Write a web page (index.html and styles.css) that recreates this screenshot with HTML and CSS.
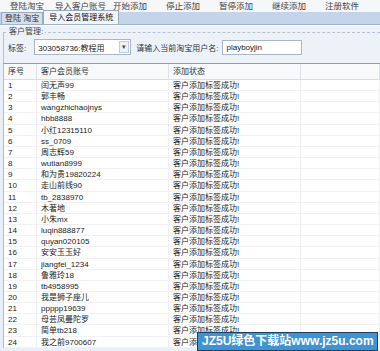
FILE: index.html
```html
<!DOCTYPE html>
<html lang="zh-CN">
<head>
    <meta charset="UTF-8">
    <title>导入会员管理系统</title>
    <link rel="stylesheet" href="styles.css">
</head>
<body>
    <div class="menubar">
        <span class="item short">登陆淘宝</span>
        <span class="item long">导入客户账号</span>
        <span class="item">开始添加</span>
        <span class="item">停止添加</span>
        <span class="item">暂停添加</span>
        <span class="item">继续添加</span>
        <span class="item">注册软件</span>
    </div>

    <div class="tabbar">
        <span class="tab">登陆 淘宝</span>
        <span class="tab active">导入会员管理系统</span>
    </div>

    <div class="panel">
        <div class="group">
            <span class="legend">客户管理:</span>
            <div class="controls">
                <span class="lbl">标签:</span>
                <div class="combo">
                    <span>303058736:教程用</span>
                    <span class="drop">▾</span>
                </div>
                <span class="lbl">请输入当前淘宝用户名:</span>
                <div class="textbox">playboyjin</div>
            </div>
        </div>
    </div>

    <div class="grid" id="grid">
        <div class="cell head">序号</div>
        <div class="cell head">客户会员账号</div>
        <div class="cell head">添加状态</div>
        <div class="cell head"></div>
    </div>

    <div class="watermark">JZ5U绿色下载站www.jz5u.com</div>

    <script>
        var accounts = [
            '闰无声99', '郭丰畅', 'wangzhichaojnys', 'hbb8888', '小红12315110',
            'ss_0709', '周志辉59', 'wutian8999', '和为贵19820224', '走山前线90',
            'tb_2838970', '木著地', '小朱mx', 'luqin888877', 'quyan020105',
            '安安玉玉好', 'jiangfei_1234', '鲁雅玲18', 'tb4958995', '我是狮子座儿',
            'ppppp19639', '母芸凤曼陀罗', '简单tb218', '我之前9700607'
        ];
        var grid = document.getElementById('grid');
        accounts.forEach(function(name, i) {
            var values = [String(i + 1), name, '客户添加标签成功!', ''];
            values.forEach(function(v) {
                var cell = document.createElement('div');
                cell.className = 'cell';
                cell.textContent = v;
                grid.appendChild(cell);
            });
        });
    </script>
</body>
</html>
```

FILE: styles.css
```css
body {
    margin: 0;
    width: 380px;
    height: 351px;
    overflow: hidden;
    position: relative;
    background-color: #e9eff8;
    font-family: "Liberation Sans", "Noto Sans CJK SC", sans-serif;
    font-size: 8px;
    color: #222;
}

/* Menu bar */
.menubar {
    height: 12px;
    display: flex;
    align-items: center;
    padding-left: 10px;
    background-color: #f6f7f9;
    color: #444;
    font-size: 8.5px;
    line-height: 12px;
}

.menubar .item {
    width: 53px;
    flex-shrink: 0;
}

.menubar .item.short {
    width: 45px;
}

.menubar .item.long {
    width: 58px;
}

/* Tabs */
.tabbar {
    height: 12px;
    display: flex;
    align-items: flex-end;
    padding-left: 1px;
    background-color: #c4d4ea;
    border-bottom: 1px solid #9fb2cc;
}

.tab {
    height: 11px;
    line-height: 11px;
    padding: 0 3px;
    background-color: #d6dee9;
    border: 1px solid #98a9c0;
    border-bottom: none;
    color: #333;
}

.tab.active {
    height: 13px;
    line-height: 13px;
    padding: 0 5px;
    background-color: #f2f5fa;
    color: #111;
}

/* Customer group */
.panel {
    height: 37px;
    overflow: hidden;
    padding-left: 3px;
    border-top: 1px solid #fff;
    background-color: #edf2f9;
}

.group {
    position: relative;
    height: 40px;
    margin-top: 6px;
    border-top: 1px dashed #b7c2d1;
    border-left: 1px solid #b7c2d1;
}

.legend {
    position: absolute;
    left: 3px;
    top: -6px;
    padding: 0 2px;
    line-height: 10px;
    background-color: #edf2f9;
    color: #444;
}

.controls {
    display: flex;
    align-items: center;
    padding: 6px 0 0 4px;
}

.lbl {
    color: #333;
}

.combo {
    width: 92px;
    height: 14px;
    margin: 0 5px 0 8px;
    display: flex;
    align-items: center;
    justify-content: space-between;
    padding-left: 3px;
    background-color: #fff;
    border: 1px solid #a9b6c8;
}

.drop {
    width: 8px;
    height: 10px;
    margin-right: 1px;
    line-height: 10px;
    text-align: center;
    font-size: 7px;
    color: #444;
    background-color: #eef1f5;
    border: 1px solid #c3cbd6;
}

.textbox {
    width: 75px;
    height: 13px;
    margin-left: 4px;
    padding-left: 3px;
    line-height: 13px;
    background-color: #fff;
    border: 1px solid #a9b6c8;
}

/* Grid */
.grid {
    margin-left: 3px;
    display: grid;
    grid-template-columns: 33px 132px 132px 1fr;
    grid-template-rows: 16px;
    grid-auto-rows: 11.17px;
    background-color: #fff;
    border-top: 1px solid #8b9db6;
    border-left: 1px solid #b2bcc9;
}

.cell {
    padding-left: 4px;
    line-height: 11px;
    white-space: nowrap;
    overflow: hidden;
    border-right: 1px solid #efefef;
    border-bottom: 1px solid #f2f2f2;
}

.cell.head {
    line-height: 15px;
    color: #333;
    background-color: #f8f9fb;
    border-right: 1px solid #dde2e8;
    border-bottom: 1px solid #d8dde4;
}

/* Site watermark over the list */
.watermark {
    position: absolute;
    left: 197px;
    bottom: 0;
    width: 175px;
    height: 17px;
    padding-left: 4px;
    line-height: 17px;
    background-color: #3f93d3;
    border: 1px solid #1f3f60;
    color: #fff;
    font-size: 12px;
    font-weight: bold;
    white-space: nowrap;
}
```
